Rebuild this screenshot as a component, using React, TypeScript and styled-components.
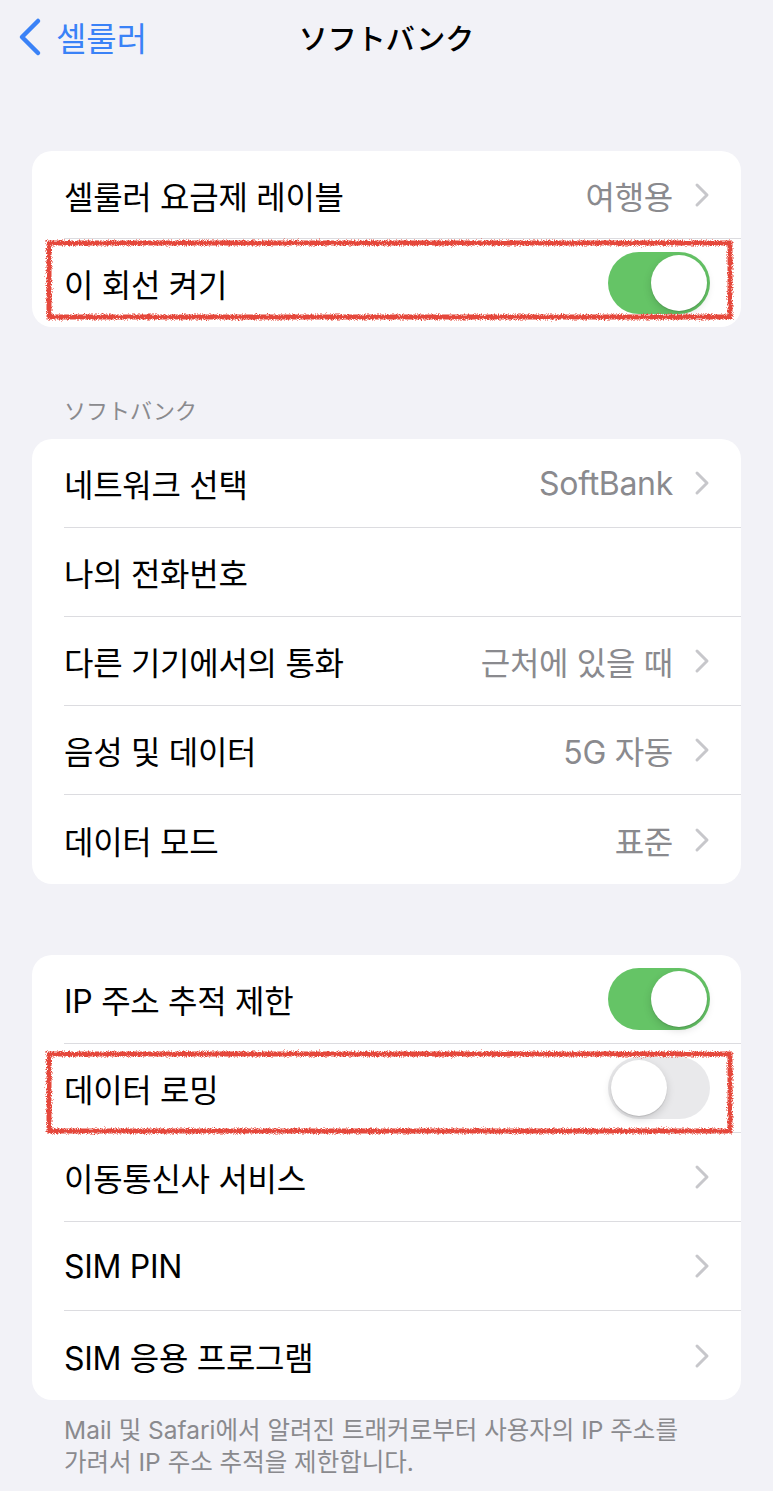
import React from "react";
import styled, { createGlobalStyle } from "styled-components";

const GlobalStyle = createGlobalStyle`
  html, body {
    margin: 0;
    padding: 0;
    background: #f2f2f7;
  }
  body {
    font-family: Inter, "Noto Sans CJK KR", "Noto Sans CJK JP", sans-serif;
    -webkit-font-smoothing: antialiased;
  }
`;

type RowData = {
  label: string;
  value?: string;
  chevron?: boolean;
  toggle?: "on" | "off";
  marked?: { top: number; bottom: number };
};

const group1: RowData[] = [
  { label: "셀룰러 요금제 레이블", value: "여행용", chevron: true },
  { label: "이 회선 켜기", toggle: "on", marked: { top: 1, bottom: 7 } },
];

const group2: RowData[] = [
  { label: "네트워크 선택", value: "SoftBank", chevron: true },
  { label: "나의 전화번호" },
  { label: "다른 기기에서의 통화", value: "근처에 있을 때", chevron: true },
  { label: "음성 및 데이터", value: "5G 자동", chevron: true },
  { label: "데이터 모드", value: "표준", chevron: true },
];

const group3: RowData[] = [
  { label: "IP 주소 추적 제한", toggle: "on" },
  { label: "데이터 로밍", toggle: "off", marked: { top: 7, bottom: -1 } },
  { label: "이동통신사 서비스", chevron: true },
  { label: "SIM PIN", chevron: true },
  { label: "SIM 응용 프로그램", chevron: true },
];

const Chevron = () => (
  <ChevronSvg width="16" height="26" viewBox="0 0 16 26">
    <path d="M3 3 L13 13 L3 23" fill="none" stroke="#c7c7cb" strokeWidth="3" strokeLinecap="round" strokeLinejoin="round" />
  </ChevronSvg>
);

// hand-drawn red marker box laid over a row
const Marker = ({ top, bottom }: { top: number; bottom: number }) => (
  <MarkBox style={{ top, bottom }}>
    <svg width="100%" height="100%" preserveAspectRatio="none">
      <defs>
        <filter id="rough" x="-5%" y="-20%" width="110%" height="140%">
          <feTurbulence type="fractalNoise" baseFrequency="1.4" numOctaves="2" seed="5" />
          <feDisplacementMap in="SourceGraphic" scale="5" />
        </filter>
      </defs>
      <rect x="3" y="3" width="calc(100% - 6px)" height="calc(100% - 6px)" fill="none" stroke="#e5473b" strokeWidth="5" filter="url(#rough)" />
    </svg>
  </MarkBox>
);

const Row = ({ row, height }: { row: RowData; height: number }) => (
  <RowWrap>
    <RowInner $height={height}>
      <Label>{row.label}</Label>
      <Trail>
        {row.value && <Value>{row.value}</Value>}
        {row.chevron && <Chevron />}
        {row.toggle && (
          <Toggle $on={row.toggle === "on"}>
            <Thumb />
          </Toggle>
        )}
      </Trail>
    </RowInner>
    {row.marked && <Marker top={row.marked.top} bottom={row.marked.bottom} />}
  </RowWrap>
);

const App = () => {
  return (
    <Page>
      <GlobalStyle />
      <Nav>
        <Back>
          <svg width="26" height="40" viewBox="0 0 26 40">
            <path d="M22 4 L6 20 L22 36" fill="none" stroke="#3a82f7" strokeWidth="4.5" strokeLinecap="round" strokeLinejoin="round" />
          </svg>
          <BackText>셀룰러</BackText>
        </Back>
        <Title>ソフトバンク</Title>
        <div />
      </Nav>

      <Group $top={77}>
        {group1.map((r) => (
          <Row key={r.label} row={r} height={88} />
        ))}
      </Group>

      <SectionHeader>ソフトバンク</SectionHeader>
      <Group $top={0}>
        {group2.map((r) => (
          <Row key={r.label} row={r} height={89} />
        ))}
      </Group>

      <Group $top={71}>
        {group3.map((r) => (
          <Row key={r.label} row={r} height={89} />
        ))}
      </Group>
      <Footer>
        Mail 및 Safari에서 알려진 트래커로부터 사용자의 IP 주소를
        <br />
        가려서 IP 주소 추적을 제한합니다.
      </Footer>
    </Page>
  );
};

export default App;

const Page = styled.div`
  width: 773px;
  min-height: 1491px;
  background: #f2f2f7;
  overflow: hidden;
`;

const Nav = styled.div`
  height: 74px;
  display: grid;
  grid-template-columns: 1fr auto 1fr;
  align-items: center;
`;

const Back = styled.div`
  display: flex;
  align-items: center;
  gap: 14px;
  padding-left: 16px;
`;

const BackText = styled.span`
  color: #3a82f7;
  font-size: 33px;
  font-family: "Noto Sans CJK KR", sans-serif;
  line-height: 1;
`;

const Title = styled.div`
  font-family: "Noto Sans CJK JP", sans-serif;
  font-size: 29px;
  font-weight: 500;
  color: #000;
`;

const Group = styled.div<{ $top: number }>`
  margin: ${(p) => p.$top}px 32px 0;
  background: #fff;
  border-radius: 20px;
`;

const RowWrap = styled.div`
  position: relative;
  padding-left: 32px;
  &:last-child > div:first-child {
    border-bottom: none;
  }
`;

const RowInner = styled.div<{ $height: number }>`
  height: ${(p) => p.$height}px;
  box-sizing: border-box;
  display: flex;
  align-items: center;
  justify-content: space-between;
  padding-right: 31px;
  border-bottom: 1px solid #dcdce0;
`;

const Label = styled.span`
  font-size: 32px;
  color: #000;
  letter-spacing: -0.3px;
`;

const Trail = styled.div`
  display: flex;
  align-items: center;
  gap: 21px;
`;

const Value = styled.span`
  font-size: 32px;
  color: #8a8a8e;
  letter-spacing: -0.3px;
`;

const ChevronSvg = styled.svg`
  display: block;
`;

const Toggle = styled.div<{ $on: boolean }>`
  width: 102px;
  height: 62px;
  border-radius: 31px;
  background: ${(p) => (p.$on ? "#65c466" : "#e9e9eb")};
  display: flex;
  align-items: center;
  justify-content: ${(p) => (p.$on ? "flex-end" : "flex-start")};
  padding: 0 3px;
  box-sizing: border-box;
`;

const Thumb = styled.div`
  width: 56px;
  height: 56px;
  border-radius: 50%;
  background: #fff;
  box-shadow: 0 3px 8px rgba(0, 0, 0, 0.15), 0 1px 1px rgba(0, 0, 0, 0.12);
`;

const MarkBox = styled.div`
  position: absolute;
  left: 14px;
  right: 8px;
  pointer-events: none;
  svg {
    display: block;
    overflow: visible;
  }
`;

const SectionHeader = styled.div`
  padding: 67px 64px 15px;
  font-family: "Noto Sans CJK JP", sans-serif;
  font-size: 22px;
  line-height: 30px;
  color: #8a8a8e;
`;

const Footer = styled.div`
  padding: 14px 64px 0;
  font-size: 24.5px;
  line-height: 32px;
  color: #8a8a8e;
`;
